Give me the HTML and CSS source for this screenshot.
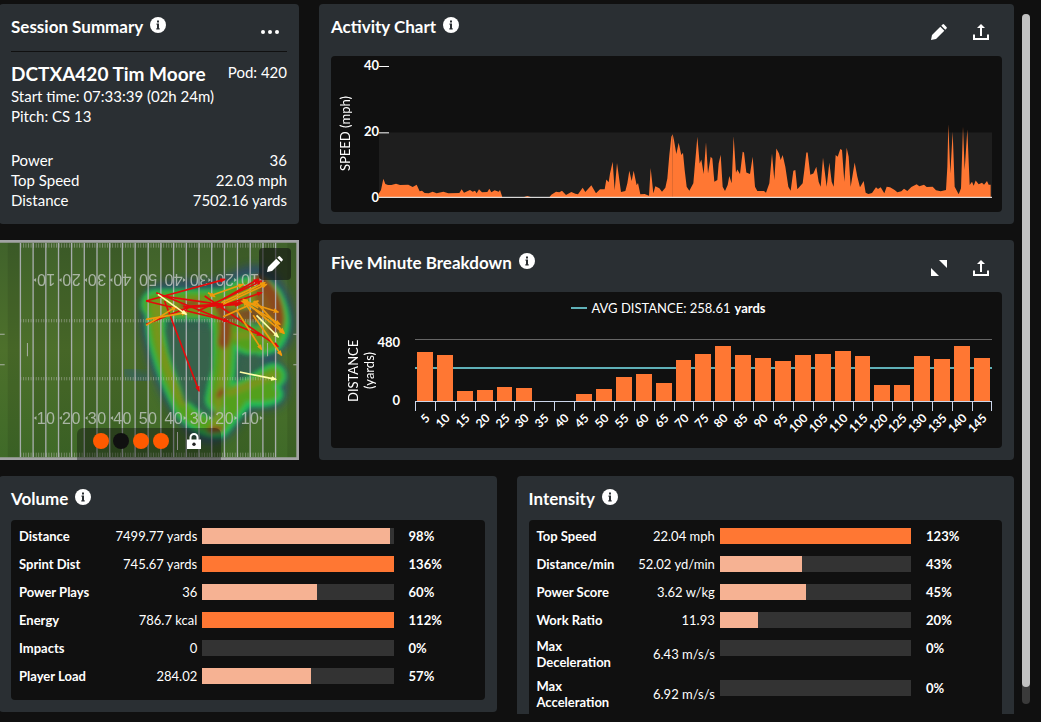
FILE: index.html
```html
<!DOCTYPE html>
<html lang="en">
<head>
  <meta charset="UTF-8">
  <meta name="viewport" content="width=device-width, initial-scale=1.0">
  <title>Session Summary</title>
  <link rel="stylesheet" href="styles.css">
</head>
<body>
  <!-- Shared icons -->
  <svg class="sprite" aria-hidden="true">
    <symbol id="icon-info" viewBox="0 0 16 16">
      <circle cx="8" cy="8" r="8" fill="#fff"/>
      <path d="M7 3.500h2v2H7zM6.500 6.600H9v4.600h.7v1.200H6.300v-1.200H7V7.800h-.5z" fill="#2a2e32"/>
    </symbol>
    <symbol id="icon-pencil" viewBox="0 0 16 16">
      <path d="M0 16l1-5L9.300 2.700l4 4L5 15zM10.300 1.700L11.500.5q.8-.8 1.600 0l2.400 2.400q.8.8 0 1.600l-1.200 1.200z" fill="#fff"/>
    </symbol>
    <symbol id="icon-share" viewBox="0 0 16 16">
      <path d="M1 10.500V15h14v-4.500M8 12V2" fill="none" stroke="#fff" stroke-width="2"/>
      <path d="M8 0l4 4H4z" fill="#fff"/>
    </symbol>
    <symbol id="icon-expand" viewBox="0 0 16 16">
      <path d="M8 0h8v8zM0 8l8 8H0z" fill="#fff"/>
    </symbol>
    <symbol id="icon-lock" viewBox="0 0 16 16">
      <path d="M4.500 7V4.500a3.500 3.500 0 0 1 7 0V7" fill="none" stroke="#fff" stroke-width="2"/>
      <path d="M1 6.500h14V16H1z" fill="#fff"/>
      <circle cx="8" cy="11.300" r="1.700" fill="#222"/>
    </symbol>
  </svg>

  <div class="page">
    <main class="dashboard">
      <div class="row row-top">
        <!-- Session summary -->
        <section class="card summary">
          <header class="card-header">
            <h2>Session Summary</h2>
            <button class="info" aria-label="About session summary"><svg><use href="#icon-info"/></svg></button>
            <button class="more" aria-label="More"><i></i><i></i><i></i></button>
          </header>
          <div class="summary-name">
            <h1>DCTXA420 Tim Moore</h1>
            <span>Pod: 420</span>
          </div>
          <p>Start time: 07:33:39 (02h 24m)</p>
          <p>Pitch: CS 13</p>
          <dl>
            <div><dt>Power</dt><dd>36</dd></div>
            <div><dt>Top Speed</dt><dd>22.03 mph</dd></div>
            <div><dt>Distance</dt><dd>7502.16 yards</dd></div>
          </dl>
        </section>

        <!-- Activity chart -->
        <section class="card">
          <header class="card-header">
            <h2>Activity Chart</h2>
            <button class="info" aria-label="About activity chart"><svg><use href="#icon-info"/></svg></button>
            <div class="actions">
              <button aria-label="Edit"><svg><use href="#icon-pencil"/></svg></button>
              <button aria-label="Share"><svg><use href="#icon-share"/></svg></button>
            </div>
          </header>
          <div class="panel activity">
            <div class="axis-title">SPEED (mph)</div>
            <div class="axis"><span>40</span><span>20</span><span>0</span></div>
            <div class="activity-plot">
              <svg viewBox="177 197 1839 397" preserveAspectRatio="none">
                <rect x="177" y="397" width="1839" height="197" fill="#1e1e1e"/>
                <g fill="#ff7733">
                  <polygon points="177,592 177,580 183,570 190,536 196,552 204,555 214,555 228,551 240,555 265,554 278,561 290,554 299,574 306,572 314,579 326,580 338,575 350,580 370,575 385,580 418,579 425,568 432,578 450,570 458,575 465,572 470,580 477,568 486,577 502,576 508,566 514,577 524,571 536,575 540,570 545,585 547,592 610,592 622,588 634,592 688,592 694,584 708,575 718,577 726,572 738,585 754,576 766,581 774,583 788,563 796,576 814,556 828,580 840,568 854,568 859,538 866,547 870,520 878,485 884,571 891,489 903,576 916,573 922,550 928,512 935,543 941,512 950,556 954,549 961,583 974,582 987,587 992,504 1000,580 1006,559 1018,565 1026,575 1036,563 1042,535 1048,465 1054,410 1058,402 1058,592"/>
                  <polygon transform="translate(1020 0)" points="37,592 38,402 42,420 49,462 56,428 64,465 69,458 74,510 80,560 88,572 100,550 106,480 112,410 119,490 124,478 131,522 138,426 144,520 152,470 157,475 163,545 172,540 176,490 182,464 188,560 195,573 203,555 208,528 215,550 221,408 228,518 232,508 240,522 248,455 252,457 259,517 270,522 278,470 285,560 292,573 312,573 318,578 328,550 336,460 343,540 349,445 357,460 362,480 368,465 376,500 385,560 392,572 400,512 406,510 412,568 428,550 433,510 439,457 443,457 451,524 460,520 469,500 476,545 482,560 489,473 500,560 508,487 515,545 521,560 527,465 533,470 541,447 546,450 553,545 560,443 566,470 572,560 584,487 592,530 600,562 611,543 617,578 625,582 636,579 648,562 654,567 662,562 673,580 680,560 690,562 704,570 712,577 724,574 732,566 742,573 754,561 770,553 778,559 792,554 800,561 818,560 828,571 842,574 858,570 862,500 865,372 871,520 878,395 884,560 896,583 903,565 909,380 914,510 922,388 929,555 936,545 941,557 947,541 956,553 966,548 972,554 981,543 986,554 992,554 992,592"/>
                </g>
                <path d="M177 592H2016" stroke="#fff" stroke-width="3"/>
                <path d="M177 198.500h30M177 398h30" stroke="#fff" stroke-width="3"/>
              </svg>
            </div>
          </div>
        </section>

        <!-- Pitch heatmap -->
        <section class="pitch">
          <svg class="field" viewBox="0 0 897 660" preserveAspectRatio="none" role="img" aria-label="Pitch heatmap">
            <defs>
              <linearGradient id="grass" x2="0" y2="1">
                <stop offset="0" stop-color="#40622b"/>
                <stop offset=".5" stop-color="#4d702b"/>
                <stop offset="1" stop-color="#3f6a28"/>
              </linearGradient>
              <pattern id="stripes" width="76" height="660" patternUnits="userSpaceOnUse" x="26">
                <rect width="38" height="660" fill="#000" opacity=".09"/>
              </pattern>
              <pattern id="hash" width="7.630" height="660" patternUnits="userSpaceOnUse" x="64">
                <path d="M1.500 0v660" stroke="#b5b9b0" stroke-width="2"/>
              </pattern>
              <filter id="soft" x="-20%" y="-20%" width="140%" height="140%"><feGaussianBlur stdDeviation="6"/></filter>
              <filter id="haze" x="-20%" y="-20%" width="140%" height="140%"><feGaussianBlur stdDeviation="12"/></filter>
              <marker id="tip-red" markerUnits="userSpaceOnUse" markerWidth="18" markerHeight="14" refX="14" refY="7" orient="auto"><path d="M0 0l18 7-18 7z" fill="#e30b0b"/></marker>
              <marker id="tip-orange" markerUnits="userSpaceOnUse" markerWidth="18" markerHeight="14" refX="14" refY="7" orient="auto"><path d="M0 0l18 7-18 7z" fill="#f09a0c"/></marker>
              <marker id="tip-cream" markerUnits="userSpaceOnUse" markerWidth="18" markerHeight="14" refX="14" refY="7" orient="auto"><path d="M0 0l18 7-18 7z" fill="#ffffa8"/></marker>
            </defs>
            <rect width="897" height="660" fill="url(#grass)"/>
            <rect width="897" height="660" fill="url(#stripes)"/>

            <!-- heat -->
            <g transform="translate(420 -12)" stroke-linejoin="round" stroke-linecap="round">
              <path d="M45 160Q120 135 190 150Q260 140 300 112Q360 85 400 125Q450 190 450 270Q440 340 395 350Q375 362 395 380Q435 395 430 440Q435 510 385 505Q325 500 295 545Q260 610 200 610Q150 590 110 525Q40 430 18 270Q15 185 45 160Z" fill="#2a5c62" stroke="#22408c" stroke-width="26" opacity=".65" filter="url(#haze)"/>
              <path d="M-35 405Q-20 425 20 430" fill="none" stroke="#2b5a80" stroke-width="38" opacity=".5" filter="url(#haze)"/>
              <g fill="none" filter="url(#soft)">
                <g stroke="#1fbf55">
                  <path d="M48 192Q42 280 62 340Q85 430 135 525Q190 580 240 575Q285 520 320 480Q370 490 400 475" stroke-width="60"/>
                  <path d="M50 205Q180 205 260 205Q345 135 385 190Q420 260 390 305Q330 330 300 290" stroke-width="92"/>
                  <path d="M250 240Q260 370 235 490Q290 490 400 420" stroke-width="78"/>
                </g>
                <g stroke="#53a01e">
                  <path d="M48 192Q42 280 62 340Q85 430 135 525Q190 575 240 570Q280 520 310 475Q370 480 395 472" stroke-width="40"/>
                  <path d="M50 207Q180 205 260 205Q345 140 385 190Q418 260 385 303Q330 325 300 290" stroke-width="74"/>
                  <path d="M250 240Q260 370 235 490Q300 480 400 420" stroke-width="56"/>
                </g>
                <g stroke="#82921c" opacity=".8">
                  <path d="M60 212Q180 205 270 210Q345 150 380 190Q410 250 380 290" stroke-width="50"/>
                  <path d="M50 210Q46 290 70 360Q90 430 130 500M255 230Q265 370 235 490Q240 520 220 580M400 418Q350 440 270 470M290 300Q340 290 390 310" stroke-width="22"/>
                </g>
                <g stroke="#8c4a1d">
                  <path d="M245 215Q265 250 252 320" stroke-width="36"/>
                  <path d="M355 135Q405 160 413 230Q420 265 400 280" stroke-width="36"/>
                  <path d="M365 180L375 230Q320 240 280 240" stroke-width="44" opacity=".8"/>
                  <path d="M130 207L170 200M212 583L240 580M238 478L246 466" stroke-width="18"/>
                </g>
              </g>
              <g fill="#37624c" opacity=".85" filter="url(#soft)">
                <path d="M78 275L215 280L216 400L185 455L180 500L135 500L115 430L88 350Z"/>
                <path d="M305 370L350 352L358 385L325 415L300 425Z"/>
              </g>
            </g>

            <!-- yard lines -->
            <g fill="url(#hash)" opacity=".8">
              <rect x="64" y="10" width="763" height="13"/>
              <rect x="64" y="237" width="763" height="10"/>
              <rect x="64" y="411" width="763" height="10"/>
              <rect x="64" y="638" width="763" height="13"/>
            </g>
            <path id="yard-lines" fill="none" stroke="#b9bac2" stroke-width="4" opacity=".85"/>
            <path d="M0 283h17M0 374h17M85 309v40M880 283h17M880 374h17M803 309v40" stroke="#a9b1a2" stroke-width="3"/>
            <path d="M0 4H897M0 656H897M893 0V660" stroke="#a2a3a4" stroke-width="8"/>
            <path d="M1 0V660" stroke="#a2a3a4" stroke-width="2"/>
            <g id="numbers" class="numbers"></g>
            <use href="#numbers" transform="rotate(180 445.500 327)"/>

            <!-- sprints -->
            <g transform="translate(420 -12)" fill="none" stroke-width="5">
              <g id="sprints-red" stroke="#e30b0b"></g>
              <g id="sprints-orange" stroke="#f09a0c"></g>
              <g id="sprints-cream" stroke="#ffffa8"></g>
            </g>
          </svg>
          <button class="pitch-edit" aria-label="Edit heatmap"><svg><use href="#icon-pencil"/></svg></button>
          <div class="pitch-bar">
            <button class="dot" aria-label="Layer 1"></button>
            <button class="dot dot-off" aria-label="Layer 2"></button>
            <button class="dot" aria-label="Layer 3"></button>
            <button class="dot" aria-label="Layer 4"></button>
            <span class="pitch-divider"></span>
            <button class="lock" aria-label="Lock"><svg><use href="#icon-lock"/></svg></button>
          </div>
        </section>

        <!-- Five minute breakdown -->
        <section class="card">
          <header class="card-header">
            <h2>Five Minute Breakdown</h2>
            <button class="info" aria-label="About five minute breakdown"><svg><use href="#icon-info"/></svg></button>
            <div class="actions">
              <button aria-label="Expand"><svg><use href="#icon-expand"/></svg></button>
              <button aria-label="Share"><svg><use href="#icon-share"/></svg></button>
            </div>
          </header>
          <div class="panel breakdown">
            <div class="legend"><i></i>AVG DISTANCE: 258.61 <b>yards</b></div>
            <div class="breakdown-body">
              <div class="axis-title">DISTANCE<br>(yards)</div>
              <div class="axis"><span>480</span><span>0</span></div>
              <div class="bars" id="bars"></div>
            </div>
          </div>
        </section>
      </div>

      <div class="row row-bottom">
        <!-- Volume -->
        <section class="card metrics">
          <header class="card-header">
            <h2>Volume</h2>
            <button class="info" aria-label="About volume"><svg><use href="#icon-info"/></svg></button>
          </header>
          <div class="panel">
            <table>
              <tbody>
                <tr><th scope="row">Distance</th><td class="value">7499.77 yards</td><td class="track"><div><i style="width: 98%"></i></div></td><td class="percent">98%</td></tr>
                <tr><th scope="row">Sprint Dist</th><td class="value">745.67 yards</td><td class="track"><div><i class="over" style="width: 100%"></i></div></td><td class="percent">136%</td></tr>
                <tr><th scope="row">Power Plays</th><td class="value">36</td><td class="track"><div><i style="width: 60%"></i></div></td><td class="percent">60%</td></tr>
                <tr><th scope="row">Energy</th><td class="value">786.7 kcal</td><td class="track"><div><i class="over" style="width: 100%"></i></div></td><td class="percent">112%</td></tr>
                <tr><th scope="row">Impacts</th><td class="value">0</td><td class="track"><div></div></td><td class="percent">0%</td></tr>
                <tr><th scope="row">Player Load</th><td class="value">284.02</td><td class="track"><div><i style="width: 57%"></i></div></td><td class="percent">57%</td></tr>
              </tbody>
            </table>
          </div>
        </section>

        <!-- Intensity -->
        <section class="card metrics">
          <header class="card-header">
            <h2>Intensity</h2>
            <button class="info" aria-label="About intensity"><svg><use href="#icon-info"/></svg></button>
          </header>
          <div class="panel">
            <table>
              <tbody>
                <tr><th scope="row">Top Speed</th><td class="value">22.04 mph</td><td class="track"><div><i class="over" style="width: 100%"></i></div></td><td class="percent">123%</td></tr>
                <tr><th scope="row">Distance/min</th><td class="value">52.02 yd/min</td><td class="track"><div><i style="width: 43%"></i></div></td><td class="percent">43%</td></tr>
                <tr><th scope="row">Power Score</th><td class="value">3.62 w/kg</td><td class="track"><div><i style="width: 45%"></i></div></td><td class="percent">45%</td></tr>
                <tr><th scope="row">Work Ratio</th><td class="value">11.93</td><td class="track"><div><i style="width: 20%"></i></div></td><td class="percent">20%</td></tr>
                <tr><th scope="row">Max<br>Deceleration</th><td class="value">6.43 m/s/s</td><td class="track"><div></div></td><td class="percent">0%</td></tr>
                <tr><th scope="row">Max<br>Acceleration</th><td class="value">6.92 m/s/s</td><td class="track"><div></div></td><td class="percent">0%</td></tr>
              </tbody>
            </table>
          </div>
        </section>
      </div>
    </main>
    <div class="scrollbar"><div class="thumb"></div></div>
  </div>

  <script src="script.js"></script>
</body>
</html>
```
FILE: styles.css
```css
* {
  box-sizing: border-box;
}

body {
  margin: 0;
  background-color: #101010;
  color: #fff;
  font-family: Lato, "Liberation Sans", sans-serif;
  font-size: 15px;
  line-height: 20px;
}

h1, h2, p, dl, dd {
  margin: 0;
}

button {
  display: block;
  padding: 0;
  border: 0;
  background: none;
  cursor: pointer;
}

button svg {
  display: block;
  width: 16px;
  height: 16px;
}

.sprite {
  display: none;
}

/* Page */
.page {
  display: flex;
  gap: 8px;
  height: 100vh;
  padding: 4px 11px 8px 0;
}

.dashboard {
  flex: 1;
  min-width: 0;
  margin-left: -1px;
  overflow: hidden;
}

.row {
  display: grid;
  gap: 16px 20px;
  margin-bottom: 16px;
}

.row-top {
  grid-template-columns: 300fr 695fr;
  grid-auto-rows: 220px;
}

.row-bottom {
  grid-template-columns: 1fr 1fr;
  align-items: start;
}

.scrollbar {
  width: 8px;
  margin: 10px 0;
  border-radius: 4px;
  background-color: #3a3a3a;
}

.thumb {
  height: 97.5%;
  border-radius: 4px;
  background-color: #c1c1c1;
}

/* Cards */
.card {
  min-width: 0;
  padding: 0 12px 12px;
  border-radius: 4px;
  background-color: #2a2f33;
  display: flex;
  flex-direction: column;
}

.card-header {
  display: flex;
  align-items: flex-start;
  gap: 7px;
  height: 52px;
  flex: none;
}

.card-header h2 {
  margin-top: 13px;
  font-size: 17px;
  line-height: 20px;
}

.info {
  margin-top: 13px;
}

.actions {
  display: flex;
  gap: 26px;
  margin: 20px 13px 0 auto;
}

.panel {
  flex: 1;
  border-radius: 4px;
  background-color: #101010;
}

/* Session summary */
.summary .card-header {
  height: 48px;
  border-bottom: 1px solid #101010;
}

.more {
  display: flex;
  gap: 3px;
  margin: 26px 8px 0 auto;
}

.more i {
  width: 4px;
  height: 4px;
  border-radius: 50%;
  background-color: #fff;
}

.summary-name {
  display: flex;
  justify-content: space-between;
  margin-top: 10px;
  height: 24px;
}

.summary-name h1 {
  font-size: 19px;
  line-height: 24px;
}

.summary dl {
  margin-top: 24px;
}

.summary dl div {
  display: flex;
  justify-content: space-between;
}

/* Charts */
.axis-title {
  writing-mode: vertical-rl;
  transform: rotate(180deg);
  text-align: center;
  font-size: 13px;
  line-height: 16px;
}

.axis {
  display: flex;
  flex-direction: column;
  justify-content: space-between;
  text-align: right;
  font-size: 13px;
  line-height: 14px;
  font-weight: bold;
}

.activity {
  display: flex;
  padding: 0 10px 0 6px;
}

.activity .axis {
  width: 26px;
  height: 146px;
  margin-top: 2px;
}

.activity-plot {
  flex: 1;
  margin-top: 10px;
}

.activity-plot svg {
  display: block;
  width: 100%;
  height: 132px;
}

.breakdown {
  padding: 6px 10px 0 14px;
}

.legend {
  display: flex;
  justify-content: center;
  align-items: center;
  gap: 4px;
  font-size: 13px;
}

.legend i {
  width: 16px;
  height: 2px;
  background-color: #5fb0b7;
}

.breakdown-body {
  display: flex;
  align-items: flex-start;
  margin-top: 21px;
}

.breakdown-body .axis-title {
  height: 63px;
}

.breakdown-body .axis {
  width: 23px;
  height: 72px;
  margin-top: -4px;
  margin-right: 15px;
}

.bars {
  position: relative;
  flex: 1;
  display: flex;
  height: 72px;
  border-top: 1px solid #666;
}

.bars::before {
  content: "";
  position: absolute;
  top: 27px;
  left: 0;
  right: 0;
  height: 2px;
  background-color: #5fb0b7;
}

.slot {
  position: relative;
  flex: 1;
  min-width: 0;
}

.slot-bar {
  height: 62px;
  padding: 0 2px;
  display: flex;
  align-items: flex-end;
  border-bottom: 1px solid #ccd6eb;
}

.slot-bar div {
  flex: 1;
  background-color: #ff7733;
}

.slot-tick {
  height: 9px;
  border-left: 1px solid #ccd6eb;
}

.slot:last-child .slot-tick {
  border-right: 1px solid #ccd6eb;
}

.slot-label {
  display: flex;
  justify-content: flex-end;
  width: 40%;
  font-size: 12px;
  line-height: 14px;
  font-weight: bold;
}

.slot-label span {
  transform: rotate(-45deg);
  transform-origin: top right;
}

/* Pitch */
.pitch {
  position: relative;
  overflow: hidden;
}

.field {
  display: block;
  width: 100%;
  height: 100%;
}

.numbers {
  fill: #c3c9c2;
  font-family: "Liberation Sans", sans-serif;
  font-size: 48px;
  text-anchor: middle;
  opacity: .8;
}

.pitch-edit {
  position: absolute;
  top: 8px;
  right: 8px;
  padding: 8px;
  border-radius: 4px;
  background-color: rgba(16, 16, 16, .6);
}

.pitch-bar {
  position: absolute;
  left: 26%;
  right: 26%;
  bottom: 0;
  display: flex;
  align-items: center;
  gap: 4px;
  height: 32px;
  padding: 0 8px 6px 16px;
  border-radius: 6px 6px 0 0;
  background-color: rgba(16, 16, 16, .4);
}

.dot {
  flex: none;
  width: 16px;
  height: 16px;
  border-radius: 50%;
  background-color: #ff5a00;
}

.dot-off {
  background-color: #101010;
}

.pitch-divider {
  width: 1px;
  height: 18px;
  margin: 0 4px;
  background-color: #8c8c8c;
}

/* Metrics */
.metrics .card-header {
  height: 44px;
}

.metrics .panel {
  padding: 2px 0 10px;
}

.metrics table {
  width: 100%;
  table-layout: fixed;
  border-collapse: collapse;
  font-size: 13px;
}

.metrics th, .metrics td {
  height: 28px;
  padding: 4px 0;
}

.metrics th {
  width: 22%;
  padding-left: 8px;
  text-align: left;
  line-height: 16px;
}

.metrics .value {
  width: 18.4%;
  padding-right: 5px;
  text-align: right;
  white-space: nowrap;
}

.metrics .track {
  width: 40.4%;
  vertical-align: top;
}

.track div {
  height: 16px;
  margin: 2px 0;
  background-color: #333;
}

.track i {
  display: block;
  height: 16px;
  background-color: #f6b293;
}

.track .over {
  background-color: #ff7733;
}

.metrics .percent {
  padding-left: 15px;
  vertical-align: top;
  font-weight: bold;
}
```
FILE: script.js
```js
const SVG_NS = 'http://www.w3.org/2000/svg';

// Share of the 480 yard scale covered in each five minute block
const blocks = [81, 76, 16, 18, 23, 21, 0, 0, 11, 19, 40, 44, 29, 68, 77, 90, 76, 71, 66, 76, 77, 82, 73, 27, 26, 74, 69, 90, 71];

const bars = document.getElementById('bars');
blocks.forEach((height, index) => {
  const slot = document.createElement('div');
  slot.className = 'slot';
  slot.innerHTML = `
    <div class="slot-bar"><div style="height: ${height}%"></div></div>
    <div class="slot-tick"></div>
    <div class="slot-label"><span>${(index + 1) * 5}</span></div>
  `;
  bars.appendChild(slot);
});

// Yard lines
let lines = '';
for (let i = 0; i <= 20; i++) {
  lines += `M${Math.round(64 + i * 38.15)} 8V652`;
}
document.getElementById('yard-lines').setAttribute('d', lines);

// Yard numbers, one digit on each side of the line
const numbers = document.getElementById('numbers');
[10, 20, 30, 40, 50, 40, 30, 20, 10].forEach((yard, index) => {
  const x = Math.round(140 + index * 76.3);
  [...String(yard)].forEach((digit, side) => {
    const text = document.createElementNS(SVG_NS, 'text');
    text.setAttribute('x', x + (side ? 14 : -14));
    text.setAttribute('y', 551);
    text.textContent = digit;
    numbers.appendChild(text);
  });
  if (yard !== 50) {
    const arrow = document.createElementNS(SVG_NS, 'path');
    arrow.setAttribute('d', index < 4 ? `M${x - 36} 534l8-6v12z` : `M${x + 38} 534l-8-6v12z`);
    numbers.appendChild(arrow);
  }
});

// Sprints: x1, y1, x2, y2
const sprints = {
  red: [
    [20, 195, 255, 130], [20, 195, 265, 255], [20, 265, 150, 212], [50, 170, 365, 298],
    [75, 195, 178, 465], [80, 182, 240, 205], [195, 180, 415, 332], [135, 215, 300, 205],
    [175, 225, 365, 135], [230, 215, 365, 170], [130, 212, 310, 200], [250, 190, 355, 130]
  ],
  orange: [
    [20, 268, 110, 212], [20, 250, 140, 230], [205, 170, 225, 182], [210, 180, 310, 145],
    [245, 200, 375, 140], [250, 205, 380, 145], [250, 242, 355, 195], [310, 195, 415, 228],
    [305, 195, 420, 265], [320, 200, 432, 292], [290, 222, 365, 340], [340, 238, 425, 358],
    [350, 200, 432, 290], [355, 215, 310, 190], [335, 230, 312, 195]
  ],
  cream: [
    [55, 175, 140, 235], [350, 238, 415, 303], [300, 408, 408, 430]
  ]
};

Object.entries(sprints).forEach(([color, list]) => {
  const group = document.getElementById(`sprints-${color}`);
  list.forEach(([x1, y1, x2, y2]) => {
    const path = document.createElementNS(SVG_NS, 'path');
    path.setAttribute('d', `M${x1} ${y1}L${x2} ${y2}`);
    path.setAttribute('marker-end', `url(#tip-${color})`);
    group.appendChild(path);
  });
});
```
